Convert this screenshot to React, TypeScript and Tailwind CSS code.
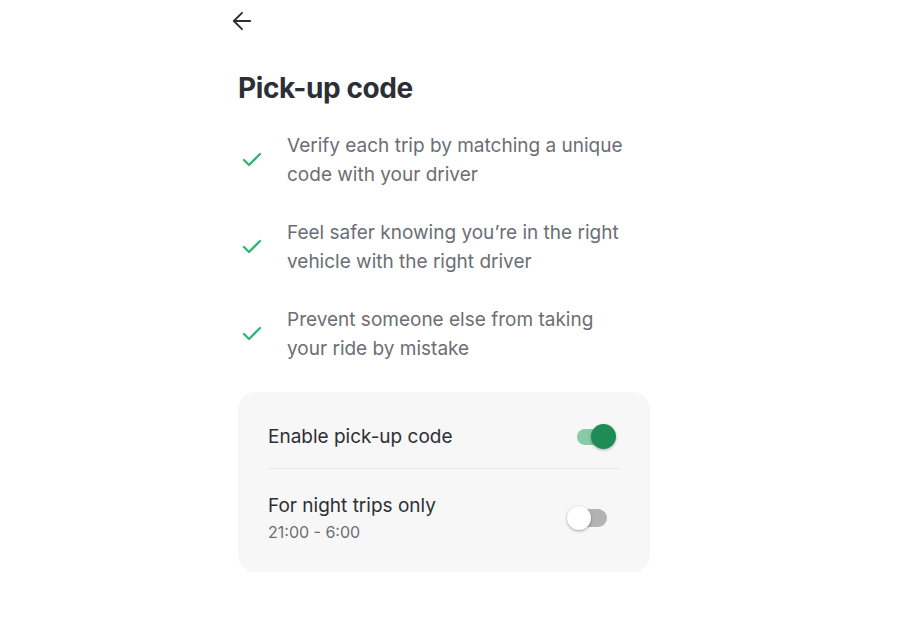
import { ArrowLeft, Check } from "lucide-react";

function Toggle({ on }: { on: boolean }) {
  return (
    <div className="relative w-[44px] h-[26px] flex items-center">
      <div
        className={
          on
            ? "ml-[1px] w-[36px] h-[16px] rounded-full bg-[#86cba5]"
            : "ml-[6px] w-[32px] h-[18px] rounded-full bg-[#b3b3b3]"
        }
      />
      <div
        className={
          on
            ? "absolute right-[4px] top-[0px] w-[25px] h-[25px] rounded-full bg-[#1e8c54] shadow-[0_1px_3px_rgba(0,0,0,0.3)]"
            : "absolute left-[-2px] top-[1px] w-[24px] h-[24px] rounded-full bg-white shadow-[0_1px_3px_rgba(0,0,0,0.35)]"
        }
      />
    </div>
  );
}

export default function App() {
  const points = [
    ["Verify each trip by matching a unique", "code with your driver"],
    ["Feel safer knowing you’re in the right", "vehicle with the right driver"],
    ["Prevent someone else from taking", "your ride by mistake"],
  ];

  return (
    <div className="min-h-[630px] bg-white font-['Inter',sans-serif]">
      <div className="w-[412px] ml-[238px]">
        <div className="pt-[7px] -ml-[10px] text-[#2d2f36]">
          <ArrowLeft size={28} strokeWidth={1.6} />
        </div>

        <h1 className="mt-[36px] text-[28px] font-bold text-[#2d2f36] tracking-[-0.4px] leading-[34px]">
          Pick-up code
        </h1>

        <div className="mt-[26px] flex flex-col gap-[29px]">
          {points.map((p, i) => (
            <div key={i} className="flex items-center">
              <div className="w-[49px] pl-[2px] text-[#2fb673]">
                <Check size={24} strokeWidth={2.3} />
              </div>
              <p className="text-[19px] leading-[29px] text-[#6b6e75]">
                {p[0]}
                <br />
                {p[1]}
              </p>
            </div>
          ))}
        </div>

        <div className="mt-[29px] rounded-[18px] bg-[#f7f7f7] px-[30px] pt-[14px] pb-[27px]">
          <div className="flex items-center justify-between h-[63px] border-b border-[#e6e6e6]">
            <span className="text-[19px] text-[#2d2f36]">Enable pick-up code</span>
            <Toggle on />
          </div>
          <div className="flex items-center justify-between pt-[24px]">
            <div className="flex flex-col">
              <span className="text-[19px] leading-[26px] text-[#2d2f36]">For night trips only</span>
              <span className="text-[16px] leading-[26px] text-[#6b6e75]">21:00 - 6:00</span>
            </div>
            <div className="mr-[7px] -mt-[2px]">
              <Toggle on={false} />
            </div>
          </div>
        </div>
      </div>
    </div>
  );
}
